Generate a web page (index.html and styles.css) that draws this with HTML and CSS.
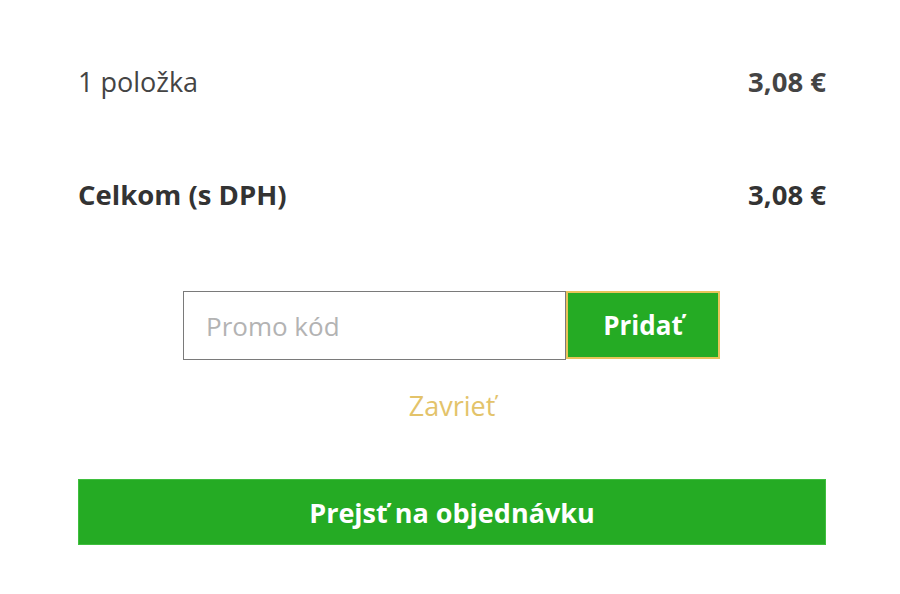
FILE: index.html
```html
<!DOCTYPE html>
<html lang="sk">
<head>
<meta charset="utf-8">
<link rel="stylesheet" href="styles.css">
</head>
<body>
<div class="cart">
  <div class="row items">
    <span>1 položka</span>
    <span class="price">3,08 €</span>
  </div>
  <div class="row total">
    <span>Celkom (s DPH)</span>
    <span class="price">3,08 €</span>
  </div>
  <div class="promo">
    <div class="promo-form">
      <input class="promo-input" type="text" placeholder="Promo kód">
      <button class="promo-btn" type="button">Pridať</button>
    </div>
    <a class="close" href="#">Zavrieť</a>
  </div>
  <button class="checkout" type="button">Prejsť na objednávku</button>
</div>
</body>
</html>
```
FILE: styles.css
```css
html, body {
  margin: 0;
  padding: 0;
  background: #fff;
}
body {
  font-family: "Open Sans", "Liberation Sans", sans-serif;
  color: #333;
}
.cart {
  width: 748px;
  margin: 0 0 0 78px;
  padding-top: 63px;
  display: flex;
  flex-direction: column;
}
.row {
  display: flex;
  justify-content: space-between;
  align-items: center;
  font-size: 27px;
  line-height: 38px;
}
.row .price {
  font-weight: 700;
  font-size: 27.5px;
}
.items {
  color: #444;
}
.total {
  margin-top: 75px;
  font-weight: 700;
  font-size: 27.5px;
}
.promo {
  margin-top: 77px;
  display: flex;
  flex-direction: column;
  align-items: center;
}
.promo-form {
  display: flex;
  margin-right: 1px;
}
.promo-input {
  box-sizing: border-box;
  width: 383px;
  height: 69px;
  border: 1px solid #7a7a7a;
  padding: 0 22px;
  font-family: inherit;
  font-size: 26px;
  color: #333;
  outline: none;
}
.promo-input::placeholder {
  color: #b3b3b3;
}
.promo-btn {
  box-sizing: border-box;
  width: 154px;
  height: 68px;
  background: #25ab24;
  border: 2px solid #e8c45a;
  color: #fff;
  font-family: inherit;
  font-weight: 700;
  font-size: 26px;
  padding: 0;
}
.close {
  margin-top: 26px;
  color: #e3c36a;
  font-size: 27px;
  line-height: 40px;
  text-decoration: none;
}
.checkout {
  margin-top: 53px;
  height: 66px;
  background: #25ab24;
  border: 1px solid #3fbf3e;
  color: #fff;
  font-family: inherit;
  font-weight: 700;
  font-size: 27px;
  padding: 0;
}
```
